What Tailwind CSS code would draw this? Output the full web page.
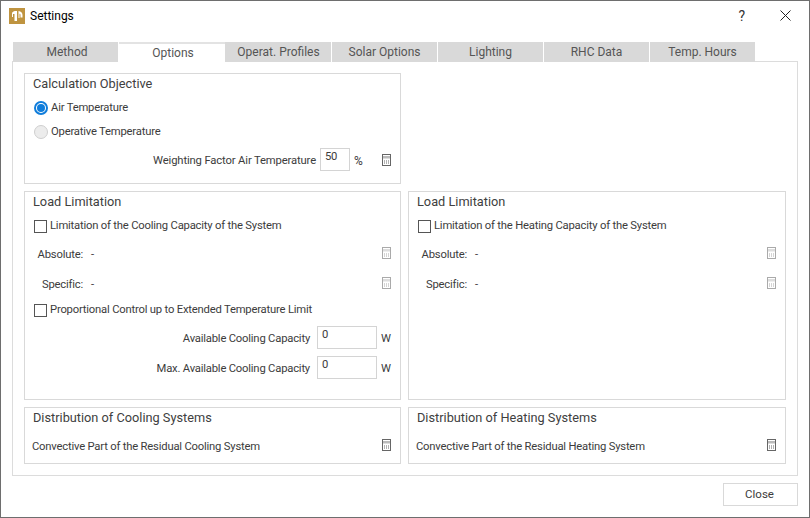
<!DOCTYPE html>
<html lang="en">

<head>
  <meta charset="utf-8">
  <title>Settings</title>
  <script src="https://cdn.jsdelivr.net/npm/@tailwindcss/browser@4"></script>
</head>

<body class="bg-white">
<div class="w-[810px] h-[518px] border border-[#6e6e6e] bg-white flex flex-col font-['Roboto',sans-serif] text-[11.25px] tracking-[-0.2px] text-[#3c3c3c] overflow-hidden">

  <!-- title bar -->
  <div class="h-[41px] flex items-start shrink-0">
    <svg class="ml-[8px] mt-[7px]" width="16" height="16" viewBox="0 0 16 16">
      <rect width="16" height="16" fill="#bf9440"/>
      <path d="M3 5 C3.5 4 4.5 3.2 6 3 H8 V13 H5.5 V6 H4 V9 H3 Z" fill="#fff"/>
      <path d="M9.5 3 C12 3.2 13.5 5 13.5 7 V9.5 H11.5 V7 C11.5 6.2 11 5.8 10.5 5.8 V10 H9.5 Z" fill="#fff"/>
    </svg>
    <span class="ml-[5px] mt-[7px] text-[12px] tracking-normal text-black leading-[16px]">Settings</span>
    <span class="ml-auto mt-[6px] text-[14px] tracking-normal leading-[18px] text-[#333]">?</span>
    <svg class="ml-[35px] mr-[18px] mt-[9px]" width="11" height="11" viewBox="0 0 11 11">
      <path d="M0.5 0.5 L10.5 10.5 M10.5 0.5 L0.5 10.5" stroke="#222" stroke-width="1" fill="none"/>
    </svg>
  </div>

  <!-- tabs -->
  <div class="flex pl-[12px] h-[20px] -mb-px shrink-0 relative z-10 text-[#555] text-[12px] tracking-normal">
    <div class="w-[106px] pl-[3px] border-r border-white bg-[#d9d9d9] flex items-center justify-center">Method</div>
    <div class="w-[106px] pl-[2px] border-t-2 border-[#e3e3e3] bg-white flex items-center justify-center">Options</div>
    <div class="w-[107px] pl-[1px] border-r border-white bg-[#d9d9d9] flex items-center justify-center">Operat. Profiles</div>
    <div class="w-[106px] border-r border-white bg-[#d9d9d9] flex items-center justify-center">Solar Options</div>
    <div class="w-[106px] border-r border-white bg-[#d9d9d9] flex items-center justify-center">Lighting</div>
    <div class="w-[106px] border-r border-white bg-[#d9d9d9] flex items-center justify-center">RHC Data</div>
    <div class="w-[105px] bg-[#d9d9d9] flex items-center justify-center">Temp. Hours</div>
  </div>

  <!-- pane -->
  <div class="ml-[11px] w-[786px] h-[415px] border border-[#dcdcdc] pt-[11px] pl-[11px] shrink-0">
    <div class="grid grid-cols-[377px_378px] grid-rows-[111px_209px_57px] gap-x-[7px] gap-y-[7px]">

      <!-- calculation objective -->
      <div class="border border-[#d9d9d9] pl-[8px] flex flex-col">
        <div class="h-[19px] text-[12.75px] tracking-normal leading-[19px] text-[#404040]">Calculation Objective</div>
        <div class="h-[24px] mt-[3px] flex items-center">
          <span class="w-[14px] h-[14px] ml-px rounded-full border-2 border-[#0f7ddb] flex items-center justify-center shrink-0"><span class="w-[8px] h-[8px] rounded-full bg-[#0f7ddb]"></span></span>
          <span class="ml-[3px]">Air Temperature</span>
        </div>
        <div class="h-[24px] flex items-center">
          <span class="w-[14px] h-[14px] ml-px rounded-full border border-[#cfcfcf] bg-[#ececec] shrink-0"></span>
          <span class="ml-[3px]">Operative Temperature</span>
        </div>
        <div class="mt-[4px] h-[23px] flex items-center justify-end">
          <span class="pt-[3px] tracking-[-0.14px]">Weighting Factor Air Temperature</span>
          <span class="ml-[4px] w-[30px] h-[23px] border border-[#d4d4d4] pl-[4px] leading-[16px]">50</span>
          <span class="ml-[4px] w-[28px] pt-[3px] text-[12px]">%</span>
          <svg class="mr-[9px]" width="9" height="12" viewBox="0 0 9 12"><rect x="0.5" y="0.5" width="8" height="11" fill="#fff" stroke="#666"/><rect x="1" y="2" width="7" height="2.5" fill="#bbb"/><path d="M2 7h1M4 7h1M6 7h1M2 9h1M4 9h1M6 9h1" stroke="#666" stroke-width="1"/></svg>
        </div>
      </div>
      <div></div>

      <!-- load limitation, cooling -->
      <div class="border border-[#d9d9d9] pl-[8px] flex flex-col">
        <div class="h-[19px] text-[12.75px] tracking-normal leading-[19px] text-[#404040]">Load Limitation</div>
        <div class="h-[24px] mt-[3px] flex items-center">
          <span class="w-[13px] h-[13px] ml-px border border-[#555] shrink-0"></span>
          <span class="ml-[3px]">Limitation of the Cooling Capacity of the System</span>
        </div>
        <div class="h-[30px] mt-[2px] flex items-center">
          <span class="w-[50px] text-right">Absolute:</span>
          <span class="ml-[8px]">-</span>
          <svg class="ml-auto mr-[9px] mb-[4px]" width="9" height="12" viewBox="0 0 9 12"><rect x="0.5" y="0.5" width="8" height="11" fill="#fff" stroke="#aaa"/><rect x="1" y="2" width="7" height="2.5" fill="#ddd"/><path d="M2 7h1M4 7h1M6 7h1M2 9h1M4 9h1M6 9h1" stroke="#aaa" stroke-width="1"/></svg>
        </div>
        <div class="h-[30px] flex items-center">
          <span class="w-[50px] text-right">Specific:</span>
          <span class="ml-[8px]">-</span>
          <svg class="ml-auto mr-[9px] mb-[4px]" width="9" height="12" viewBox="0 0 9 12"><rect x="0.5" y="0.5" width="8" height="11" fill="#fff" stroke="#aaa"/><rect x="1" y="2" width="7" height="2.5" fill="#ddd"/><path d="M2 7h1M4 7h1M6 7h1M2 9h1M4 9h1M6 9h1" stroke="#aaa" stroke-width="1"/></svg>
        </div>
        <div class="h-[20px] flex items-center">
          <span class="w-[13px] h-[13px] ml-px border border-[#555] shrink-0"></span>
          <span class="ml-[3px]">Proportional Control up to Extended Temperature Limit</span>
        </div>
        <div class="mt-[6px] h-[23px] flex items-center justify-end">
          <span class="pt-[3px]">Available Cooling Capacity</span>
          <span class="ml-[7px] w-[60px] h-[23px] border border-[#d4d4d4] pl-[4px] leading-[16px]">0</span>
          <span class="ml-[4px] w-[15px] pt-[3px]">W</span>
          <span class="w-[4px]"></span>
        </div>
        <div class="mt-[7px] h-[23px] flex items-center justify-end">
          <span class="pt-[3px]">Max. Available Cooling Capacity</span>
          <span class="ml-[7px] w-[60px] h-[23px] border border-[#d4d4d4] pl-[4px] leading-[16px]">0</span>
          <span class="ml-[4px] w-[15px] pt-[3px]">W</span>
          <span class="w-[4px]"></span>
        </div>
      </div>

      <!-- load limitation, heating -->
      <div class="border border-[#d9d9d9] pl-[8px] flex flex-col">
        <div class="h-[19px] text-[12.75px] tracking-normal leading-[19px] text-[#404040]">Load Limitation</div>
        <div class="h-[24px] mt-[3px] flex items-center">
          <span class="w-[13px] h-[13px] ml-px border border-[#555] shrink-0"></span>
          <span class="ml-[3px]">Limitation of the Heating Capacity of the System</span>
        </div>
        <div class="h-[30px] mt-[2px] flex items-center">
          <span class="w-[50px] text-right">Absolute:</span>
          <span class="ml-[8px]">-</span>
          <svg class="ml-auto mr-[9px] mb-[4px]" width="9" height="12" viewBox="0 0 9 12"><rect x="0.5" y="0.5" width="8" height="11" fill="#fff" stroke="#aaa"/><rect x="1" y="2" width="7" height="2.5" fill="#ddd"/><path d="M2 7h1M4 7h1M6 7h1M2 9h1M4 9h1M6 9h1" stroke="#aaa" stroke-width="1"/></svg>
        </div>
        <div class="h-[30px] flex items-center">
          <span class="w-[50px] text-right">Specific:</span>
          <span class="ml-[8px]">-</span>
          <svg class="ml-auto mr-[9px] mb-[4px]" width="9" height="12" viewBox="0 0 9 12"><rect x="0.5" y="0.5" width="8" height="11" fill="#fff" stroke="#aaa"/><rect x="1" y="2" width="7" height="2.5" fill="#ddd"/><path d="M2 7h1M4 7h1M6 7h1M2 9h1M4 9h1M6 9h1" stroke="#aaa" stroke-width="1"/></svg>
        </div>
      </div>

      <!-- distribution -->
      <div class="border border-[#d9d9d9] pl-[8px] flex flex-col">
        <div class="h-[19px] text-[12.75px] tracking-normal leading-[19px] text-[#404040]">Distribution of Cooling Systems</div>
        <div class="h-[24px] mt-[8px] flex items-center justify-between">
          <span class="-ml-px">Convective Part of the Residual Cooling System</span>
          <svg class="mr-[9px] mb-[4px]" width="9" height="12" viewBox="0 0 9 12"><rect x="0.5" y="0.5" width="8" height="11" fill="#fff" stroke="#666"/><rect x="1" y="2" width="7" height="2.5" fill="#bbb"/><path d="M2 7h1M4 7h1M6 7h1M2 9h1M4 9h1M6 9h1" stroke="#666" stroke-width="1"/></svg>
        </div>
      </div>
      <div class="border border-[#d9d9d9] pl-[8px] flex flex-col">
        <div class="h-[19px] text-[12.75px] tracking-normal leading-[19px] text-[#404040]">Distribution of Heating Systems</div>
        <div class="h-[24px] mt-[8px] flex items-center justify-between">
          <span class="-ml-px">Convective Part of the Residual Heating System</span>
          <svg class="mr-[9px] mb-[4px]" width="9" height="12" viewBox="0 0 9 12"><rect x="0.5" y="0.5" width="8" height="11" fill="#fff" stroke="#666"/><rect x="1" y="2" width="7" height="2.5" fill="#bbb"/><path d="M2 7h1M4 7h1M6 7h1M2 9h1M4 9h1M6 9h1" stroke="#666" stroke-width="1"/></svg>
        </div>
      </div>
    </div>
  </div>

  <!-- footer -->
  <div class="flex justify-end pr-[11px] pt-[7px]">
    <button class="w-[75px] h-[23px] border border-[#d9d9d9] bg-white pr-[2px] text-[11.5px] tracking-normal text-[#3c3c3c]">Close</button>
  </div>
</div>
</body>

</html>
